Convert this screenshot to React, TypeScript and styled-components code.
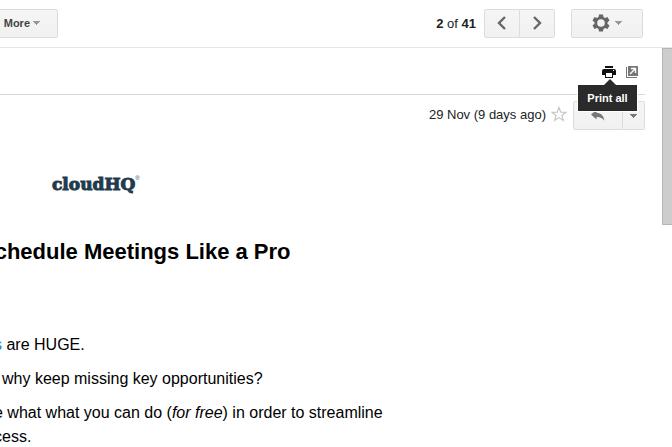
import React from "react";
import styled, { createGlobalStyle } from "styled-components";

const GlobalStyle = createGlobalStyle`
  * { box-sizing: border-box; }
  html, body, #root { height: 100%; }
  body {
    margin: 0;
    background: #fff;
    color: #000;
    font-family: "Liberation Sans", Arial, sans-serif;
    font-size: 13px;
    overflow: hidden;
  }
`;

const Page = styled.div`
  height: 100%;
  display: flex;
  flex-direction: column;
`;

const Toolbar = styled.header`
  flex: none;
  display: flex;
  align-items: center;
  height: 48px;
  padding: 0 29px 1px 0;
  border-bottom: 1px solid #e5e5e5;
`;

const Button = styled.button<{ $width: number; $side?: "left" | "right" }>`
  display: flex;
  align-items: center;
  justify-content: center;
  gap: 5px;
  width: ${(p) => p.$width}px;
  height: 29px;
  padding: 0;
  margin: 0;
  border: 1px solid #dcdcdc;
  border-left-width: ${(p) => (p.$side === "right" ? 0 : 1)}px;
  border-radius: ${(p) =>
    p.$side === "left" ? "2px 0 0 2px" : p.$side === "right" ? "0 2px 2px 0" : "2px"};
  background: linear-gradient(#f5f5f5, #f1f1f1);
  color: #444;
  font: bold 11px "Liberation Sans", Arial, sans-serif;
`;

const MoreButton = styled(Button)`
  justify-content: flex-end;
  gap: 3px;
  margin-left: -8px;
  padding-right: 17px;
`;

const Count = styled.div`
  margin: 0 8px 0 auto;
  color: #222;
`;

const ButtonGroup = styled.div`
  display: flex;
`;

const Pager = styled(ButtonGroup)`
  margin-right: 16px;
`;

const Body = styled.div`
  flex: 1;
  min-height: 0;
  display: flex;
`;

const Message = styled.main`
  flex: 1;
  min-width: 0;
  overflow: hidden;
  padding-right: 17px;
`;

const Scrollbar = styled.div`
  flex: none;
  width: 10px;
`;

const Thumb = styled.div`
  height: 177px;
  background: #cdcdcd;
  border: solid #b5b5b5;
  border-width: 1px 0 1px 1px;
`;

const Actions = styled.div`
  display: flex;
  justify-content: flex-end;
  align-items: center;
  gap: 10px;
  height: 47px;
  padding-right: 7px;
  padding-top: 1px;
  border-bottom: 1px solid #d8d8d8;
`;

const IconButton = styled.button`
  position: relative;
  display: flex;
  padding: 0;
  border: 0;
  background: none;
`;

const Tooltip = styled.span`
  position: absolute;
  z-index: 1;
  top: 18px;
  left: -25px;
  width: 61px;
  height: 28px;
  border: 1px solid #fff;
  background: #2a2a2a;
  color: #fff;
  font: bold 11px/26px "Liberation Sans", Arial, sans-serif;
  text-align: center;
  white-space: nowrap;

  &::before {
    content: "";
    position: absolute;
    left: 50%;
    bottom: 100%;
    margin-left: -4px;
    border: solid transparent;
    border-width: 0 6px 6px;
    border-bottom-color: #2a2a2a;
  }
`;

const Meta = styled.div`
  display: flex;
  align-items: center;
  justify-content: flex-end;
  gap: 6px;
  padding-top: 6px;
  color: #222;
`;

const DateAndStar = styled.div`
  display: flex;
  align-items: center;
  gap: 5px;
  padding-bottom: 3px;
`;

const Logo = styled.div`
  margin: 44px 0 0 52px;
  display: flex;
  align-items: flex-start;
  height: 20px;
  color: #1f3b4d;
  font: bold 17px/20px "DejaVu Serif", serif;
  -webkit-text-stroke: 1px #1f3b4d;

  sup {
    font: 6px/8px "Liberation Sans", Arial, sans-serif;
    -webkit-text-stroke: 0;
  }
`;

/* The message column begins beyond the window's left edge. */
const Title = styled.h1`
  margin: 45px 0 68px -20px;
  font-size: 22px;
  line-height: 26px;
  white-space: nowrap;
`;

const Paragraph = styled.p<{ $start: number }>`
  margin: 0 0 10px ${(p) => p.$start}px;
  font-size: 16px;
  line-height: 24px;
  white-space: nowrap;
`;

const Link = styled.a`
  color: #1788c9;
  text-decoration: none;
`;

const Caret = ({ color = "#999" }: { color?: string }) => (
  <svg width="7" height="4" viewBox="0 0 7 4" shapeRendering="crispEdges" aria-hidden="true">
    <path d="M0 0h7v1H6v1H5v1H4v1H3V3H2V2H1V1H0z" fill={color} />
  </svg>
);

const Chevron = ({ d }: { d: string }) => (
  <svg width="12" height="14" viewBox="0 0 12 14" fill="none" stroke="#666" strokeWidth="2.4" aria-hidden="true">
    <path d={d} />
  </svg>
);

const Gear = () => (
  <svg width="18" height="18" viewBox="3 3 18 18" fill="#666" fillRule="evenodd" aria-hidden="true">
    <path d="M10 3.5h4l.5 2.6 1.5.9 2.5-1 2 3.5-2 1.7v1.6l2 1.7-2 3.5-2.5-1-1.5.9-.5 2.6h-4l-.5-2.6-1.5-.9-2.5 1-2-3.5 2-1.7v-1.6l-2-1.7 2-3.5 2.5 1 1.5-.9zM12 8.2a3.8 3.8 0 100 7.6 3.8 3.8 0 000-7.6z" />
  </svg>
);

const Printer = () => (
  <svg width="14" height="12" viewBox="0 0 14 12" aria-hidden="true">
    <path d="M3 0h8v2H3zM2 3h10a2 2 0 012 2v4h-3V6H3v3H0V5a2 2 0 012-2z" fill="#111" />
    <path d="M3 6h8v6H3z" fill="#111" />
    <path d="M4 7h6v4H4z" fill="#fff" />
    <path d="M11 4h1v1h-1z" fill="#fff" />
  </svg>
);

const NewWindow = () => (
  <svg width="12" height="12" viewBox="0 0 12 12" aria-hidden="true">
    <path d="M0 1h1v10h10v1H0z" fill="#777" />
    <path d="M2 0h10v10H2z" fill="#777" />
    <path d="M4 8l5-5M5 2.5h4.5V7" fill="none" stroke="#fff" strokeWidth="1.3" />
  </svg>
);

const Star = () => (
  <svg width="16" height="16" viewBox="0 0 16 16" fill="none" stroke="#c6c6c6" strokeWidth="1.2" aria-hidden="true">
    <path d="M8 1.5l1.8 4.7 5 .2-3.9 3.1 1.4 4.9L8 11.6l-4.3 2.8 1.4-4.9-3.9-3.1 5-.2z" />
  </svg>
);

const Reply = () => (
  <svg width="14" height="11" viewBox="0 0 14 11" aria-hidden="true">
    <path d="M0 4.5L5.5 0v2.7c4.5.2 7.2 3 8 8-2-2.6-4.3-3.8-8-3.7v2.5z" fill="#777" />
  </svg>
);

export default function App() {
  return (
    <Page>
      <GlobalStyle />
      <Toolbar>
        <MoreButton $width={66}>
          More <Caret />
        </MoreButton>
        <Count>
          <b>2</b> of <b>41</b>
        </Count>
        <Pager>
          <Button $width={36} $side="left" aria-label="Newer">
            <Chevron d="M9 1L3 7l6 6" />
          </Button>
          <Button $width={35} $side="right" aria-label="Older">
            <Chevron d="M3 1l6 6-6 6" />
          </Button>
        </Pager>
        <Button $width={72} aria-label="Settings">
          <Gear /> <Caret />
        </Button>
      </Toolbar>
      <Body>
        <Message>
          <Actions>
            <IconButton aria-label="Print all">
              <Printer />
              <Tooltip role="tooltip">Print all</Tooltip>
            </IconButton>
            <IconButton aria-label="In new window">
              <NewWindow />
            </IconButton>
          </Actions>
          <Meta>
            <DateAndStar>
              <time>29 Nov (9 days ago)</time>
              <IconButton aria-label="Star">
                <Star />
              </IconButton>
            </DateAndStar>
            <ButtonGroup>
              <Button $width={50} $side="left" aria-label="Reply">
                <Reply />
              </Button>
              <Button $width={22} $side="right" aria-label="More reply options">
                <Caret color="#777" />
              </Button>
            </ButtonGroup>
          </Meta>
          <Logo>
            cloudHQ<sup>®</sup>
          </Logo>
          <Title>Schedule Meetings Like a Pro</Title>
          <Paragraph $start={-6}>
            <Link href="#meetings">s</Link> are HUGE.
          </Paragraph>
          <Paragraph $start={2}>why keep missing key opportunities?</Paragraph>
          <Paragraph $start={-6}>
            e what what you can do (<em>for free</em>) in order to streamline
            <br />
            cess.
          </Paragraph>
        </Message>
        <Scrollbar>
          <Thumb />
        </Scrollbar>
      </Body>
    </Page>
  );
}
